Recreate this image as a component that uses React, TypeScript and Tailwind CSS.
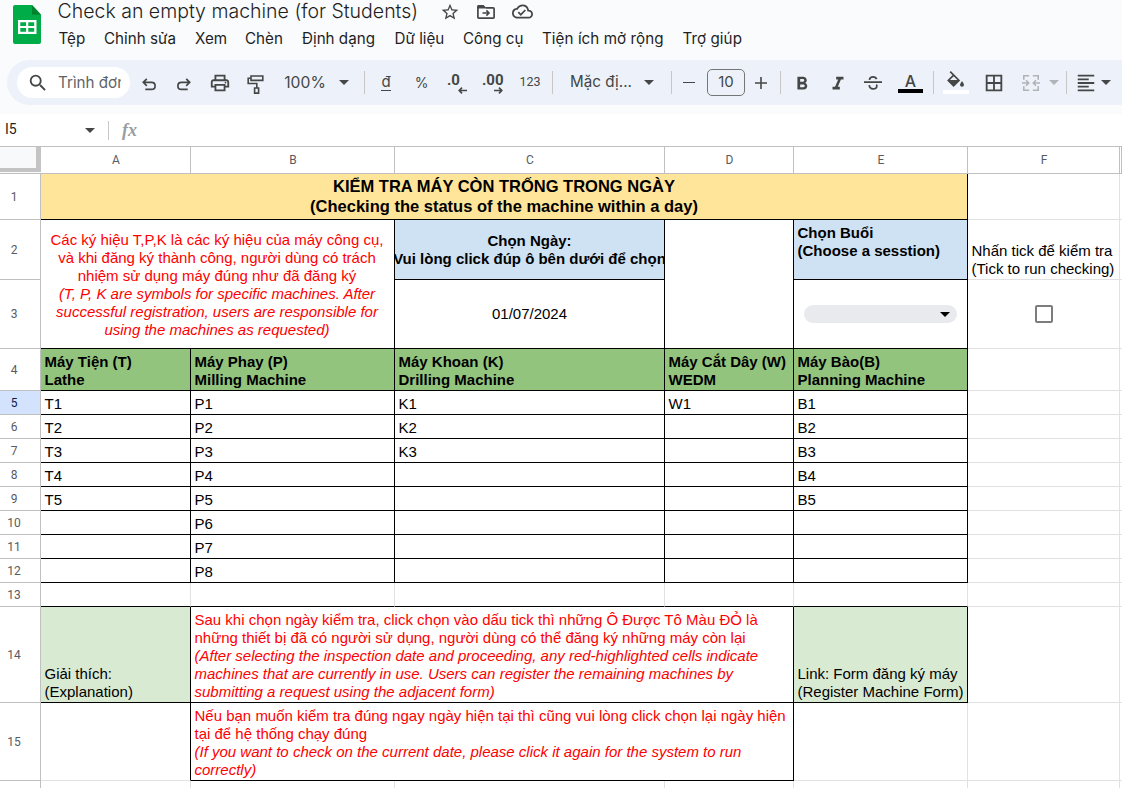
import type { ReactNode } from "react";
import {
  MdBorderAll,
  MdFormatAlignLeft,
  MdFormatBold,
  MdFormatItalic,
  MdOutlineCloudDone,
  MdOutlinePrint,
  MdSearch,
  MdStarBorder,
} from "react-icons/md";

const menus = [
  { label: "Tệp", cls: "w-[45.500px]" },
  { label: "Chỉnh sửa", cls: "w-[91px]" },
  { label: "Xem", cls: "w-[50px]" },
  { label: "Chèn", cls: "w-[57px]" },
  { label: "Định dạng", cls: "w-[92.500px]" },
  { label: "Dữ liệu", cls: "w-[68.500px]" },
  { label: "Công cụ", cls: "w-[79px]" },
  { label: "Tiện ích mở rộng", cls: "w-[140.500px] tracking-[0.06px]" },
  { label: "Trợ giúp", cls: "w-[70px] tracking-[0.06px]" },
];

function Caret({ className = "" }: { className?: string }) {
  return (
    <svg viewBox="0 0 10 5" className={`h-[5px] w-[10px] shrink-0 ${className}`}>
      <path d="M0 0h10L5 5z" fill="currentColor" />
    </svg>
  );
}

function Divider({ className }: { className: string }) {
  return <div className={`h-[23px] w-px shrink-0 bg-[#c7c7c7] ${className}`} />;
}

function Slot({ className, children }: { className: string; children: ReactNode }) {
  return (
    <div className={`flex h-full shrink-0 items-center justify-center whitespace-nowrap ${className}`}>
      {children}
    </div>
  );
}

function SheetsLogo() {
  return (
    <svg viewBox="0 0 28 39" className="mt-[5px] h-[39px] w-[28px] shrink-0">
      <path d="M2 0H19l9 9.500V37a2 2 0 0 1-2 2H2a2 2 0 0 1-2-2V2a2 2 0 0 1 2-2z" fill="#00ac47" />
      <path d="M19 0l9 9.700h-9z" fill="#00832d" />
      <path d="M5 15h18.500v14H5z" fill="#fff" />
      <path d="M7.300 17.200h5.800v3.700H7.300zM15.300 17.200h5.900v3.700h-5.900zM7.300 23.100h5.800v3.700H7.300zM15.300 23.100h5.900v3.700h-5.900z" fill="#00ac47" />
    </svg>
  );
}

function MoveIcon() {
  return (
    <svg viewBox="0 0 18 14" className="h-[14px] w-[18px]" fill="none" stroke="currentColor" strokeWidth="1.700">
      <path d="M.9 2.800v9.400c0 .5.4.9.9.9h14.400c.5 0 .9-.4.9-.9V3.700c0-.5-.4-.9-.9-.9H9" />
      <path d="M0 3.600V1.500C0 .7.7 0 1.500 0h5L9 2.500v1.100z" fill="currentColor" stroke="none" />
      <path d="M5.500 8h6M9.400 5.400 12 8l-2.600 2.600" strokeWidth="1.500" />
    </svg>
  );
}

function UndoIcon({ flip = false }: { flip?: boolean }) {
  return (
    <svg
      viewBox="0 0 14 13"
      className={flip ? "mt-[3px] h-[13px] w-[14px] -scale-x-100" : "mt-[3px] ml-px h-[13px] w-[14px]"}
      fill="none"
      stroke="currentColor"
      strokeWidth="1.700"
    >
      <path d="M4.800.8 1.300 4.300l3.500 3.500M1.500 4.300h8.100c2 0 3.500 1.500 3.500 3.600 0 2-1.500 3.500-3.500 3.500H3.300" />
    </svg>
  );
}

function RollerIcon() {
  return (
    <svg viewBox="0 0 17 19" className="mt-[3px] h-[19px] w-[17px]" fill="none" stroke="currentColor" strokeWidth="1.600">
      <path d="M4 1h11.800v4.400H4zM4 3.200H1.200v5.300h8.600V13M7.600 13h4v5.100h-4z" />
    </svg>
  );
}

function Decimal({ digits, right = false }: { digits: string; right?: boolean }) {
  return (
    <div className="mt-[3px] flex w-[20px] flex-col">
      <span className={`font-['Roboto',sans-serif] text-[15px] leading-[13px] font-bold ${right ? "-ml-px" : "text-left"}`}>{digits}</span>
      <svg viewBox="0 0 9 7" className={`h-[7px] w-[9px] self-end ${right ? "-scale-x-100" : ""}`} fill="none" stroke="currentColor" strokeWidth="1.600">
        <path d="M9 3.500H1.200M4 .6 1.200 3.500 4 6.400" />
      </svg>
    </div>
  );
}

function StrikeIcon() {
  return (
    <svg viewBox="0 0 18 14" className="h-[14px] w-[18px]" fill="none" stroke="currentColor" strokeWidth="1.700">
      <path d="M0 6.200h18M5.400 3.900C5.700 2 7 .9 9.100.9c1.700 0 2.900.7 3.500 2.200M5.200 9.200c.3 2.400 1.700 3.700 3.900 3.700 2.300 0 3.700-1.100 3.700-2.900 0-.6-.1-1.100-.4-1.500" />
    </svg>
  );
}

function FillIcon() {
  return (
    <svg viewBox="0 0 18 17" className="h-[17px] w-[18px]">
      <path d="M3.200.6 12 9.400 6.600 14.800 1.300 9.400l5.400-5.300" fill="none" stroke="currentColor" strokeWidth="1.700" />
      <path d="M1.300 9h10.800l-5.500 5.600z" fill="currentColor" />
      <path d="M15 10.300s-2 2.200-2 3.500a2 2 0 0 0 4 0c0-1.300-2-3.500-2-3.500z" fill="currentColor" />
    </svg>
  );
}

function MergeIcon() {
  return (
    <svg viewBox="0 0 18 16" className="h-[16px] w-[18px]" fill="none" stroke="currentColor" strokeWidth="1.600">
      <path d="M7.200.8H1.800v4M10.800.8h5.400v4M7.200 15.200H1.800v-4M10.800 15.200h5.400v-4" />
      <path d="M0 8h6.500M4 5.300 6.700 8 4 10.700M18 8h-6.500M14 5.300 11.300 8l2.700 2.700" />
    </svg>
  );
}

function Toolbar() {
  return (
    <div className="ml-[7px] flex h-[45px] shrink-0 items-center overflow-hidden rounded-l-full bg-[#edf2fa] text-[#444746]">
      <div className="ml-[10px] flex h-[31px] w-[113px] shrink-0 items-center overflow-hidden rounded-full bg-white">
        <MdSearch className="ml-[10px] size-[22px] shrink-0" />
        <span className="ml-[9px] w-[63px] overflow-hidden pt-px text-[15.200px] whitespace-nowrap text-[#5f6368]">Trình đơn</span>
      </div>
      <Slot className="ml-[6px] w-6"><UndoIcon /></Slot>
      <Slot className="ml-3 w-6"><UndoIcon flip /></Slot>
      <Slot className="ml-3 w-6"><MdOutlinePrint className="mt-px size-[22px]" /></Slot>
      <Slot className="ml-[11px] w-6"><RollerIcon /></Slot>
      <Slot className="ml-[17px] w-[42px] pt-px text-[15.700px]">100%</Slot>
      <Slot className="ml-[6px] w-6"><Caret /></Slot>
      <Divider className="ml-2" />
      <Slot className="ml-[11px] w-5">
        <span className="h-[17px] border-b-[1.500px] border-current text-[15px] leading-[15px]">đ</span>
      </Slot>
      <Slot className="ml-[15px] w-[21px] text-[14px]">%</Slot>
      <Slot className="ml-[13px] w-6"><Decimal digits=".0" /></Slot>
      <Slot className="ml-3 w-6"><Decimal digits=".00" right /></Slot>
      <Slot className="ml-[13px] w-6 font-['Roboto',sans-serif] text-[12.500px]">123</Slot>
      <Divider className="ml-[10px]" />
      <Slot className="ml-[17px] w-[62px] text-[15.200px]">Mặc đị...</Slot>
      <Slot className="ml-[5px] w-6"><Caret /></Slot>
      <Divider className="ml-[10px]" />
      <Slot className="ml-[5px] w-6"><div className="h-[1.500px] w-[12px] bg-current" /></Slot>
      <div className="ml-[6px] flex h-[27px] w-[38px] shrink-0 items-center justify-center rounded-[5px] border border-[#747775] text-[15px]">10</div>
      <Slot className="ml-1 w-6">
        <svg viewBox="0 0 12 12" className="size-[12px]" fill="none" stroke="currentColor" strokeWidth="1.600"><path d="M6 0v12M0 6h12" /></svg>
      </Slot>
      <Divider className="ml-[7px]" />
      <Slot className="ml-[9px] w-6"><MdFormatBold className="mt-[3px] size-[22px]" /></Slot>
      <Slot className="ml-3 w-6"><MdFormatItalic className="mt-[3px] size-[22px]" /></Slot>
      <Slot className="ml-[11px] w-6"><StrikeIcon /></Slot>
      <div className="mt-[2px] ml-[13px] flex w-[25px] shrink-0 flex-col items-center">
        <span className="h-[15px] text-[16px] leading-[14px] font-medium">A</span>
        <div className="h-1 w-full bg-black" />
      </div>
      <Divider className="ml-[10px]" />
      <div className="-mt-px ml-[9px] flex w-[26px] shrink-0 flex-col items-center">
        <FillIcon />
        <div className="mt-[2px] h-1 w-full bg-white" />
      </div>
      <Slot className="ml-[13px] w-6"><MdBorderAll className="mt-px size-[22px]" /></Slot>
      <Slot className="ml-[13px] w-6 text-[#b0b3b7]"><MergeIcon /></Slot>
      <Slot className="ml-[2px] w-[18px] text-[#b0b3b7]"><Caret /></Slot>
      <Divider className="ml-[3px]" />
      <Slot className="ml-[7px] w-6"><MdFormatAlignLeft className="mt-px size-[22px]" /></Slot>
      <Slot className="ml-px w-[14px]"><Caret /></Slot>
    </div>
  );
}

const K = "border-black";
const G = "border-[#e1e1e1]";
const MIX_RK = "border-r-black border-b-[#e1e1e1]";
const MIX_BK = "border-r-[#e1e1e1] border-b-black";

function Cell({ className, children }: { className: string; children?: ReactNode }) {
  return (
    <div className={`flex min-w-0 flex-col justify-end overflow-hidden border-r border-b pb-px pl-[3.500px] whitespace-nowrap ${className}`}>
      {children}
    </div>
  );
}

function RowHead({ n, active = false }: { n?: number; active?: boolean }) {
  return (
    <div
      className={`col-start-1 flex items-center justify-center border-r border-b border-[#c0c0c0] pr-3 font-['Roboto',sans-serif] text-[12px] ${
        active ? "bg-[#d3e3fd] text-[#041e49]" : "text-[#575b5f]"
      }`}
    >
      {n}
    </div>
  );
}

const machines = [
  ["T1", "P1", "K1", "W1", "B1"],
  ["T2", "P2", "K2", "", "B2"],
  ["T3", "P3", "K3", "", "B3"],
  ["T4", "P4", "", "", "B4"],
  ["T5", "P5", "", "", "B5"],
  ["", "P6", "", "", ""],
  ["", "P7", "", "", ""],
  ["", "P8", "", "", ""],
];

function MachineRow({ n, cells }: { n: number; cells: string[] }) {
  return (
    <>
      <RowHead n={n} active={n === 5} />
      {cells.map((c, i) => (
        <Cell key={i} className={K}>{c}</Cell>
      ))}
      <Cell className={G} />
      <Cell className={`!border-r-0 ${G}`} />
    </>
  );
}

function Sheet() {
  return (
    <div className="grid shrink-0 grid-cols-[41px_150px_204px_270px_129px_174px_152px_2px] grid-rows-[27px_46px_60px_69px_42px_repeat(9,24px)_96px_78px_8px] bg-white font-['Liberation_Sans',Arial,sans-serif] text-[15px] leading-[18px] text-black">
      <div className="flex border-b border-[#c0c0c0] bg-[#f8f9fa] pb-px">
        <div className="w-full border-r-[5px] border-b-4 border-[#c4c4c4]" />
      </div>
      {["A", "B", "C", "D", "E", "F", ""].map((c) => (
        <div key={c} className="flex items-center justify-center border-r border-b border-[#c0c0c0] pl-px font-['Roboto',sans-serif] text-[12px] text-[#575b5f] last:border-r-0">
          {c}
        </div>
      ))}

      <RowHead n={1} />
      <Cell className={`col-span-5 !justify-center bg-[#ffe599] !pl-0 text-center text-[16.500px] leading-[20px] font-bold ${K}`}>
        <p>KIỂM TRA MÁY CÒN TRỐNG TRONG NGÀY</p>
        <p>(Checking the status of the machine within a day)</p>
      </Cell>
      <Cell className={G} />
      <Cell className={`!border-r-0 ${G}`} />

      <RowHead n={2} />
      <Cell className={`col-span-2 row-span-2 !justify-center !pt-px !pr-px !pb-0 !pl-0 text-center text-[#ff0000] ${K}`}>
        <p>Các ký hiệu T,P,K là các ký hiệu của máy công cụ,</p>
        <p>và khi đăng ký thành công, người dùng có trách</p>
        <p>nhiệm sử dụng máy đúng như đã đăng ký</p>
        <p className="italic">(T, P, K are symbols for specific machines. After</p>
        <p className="italic">successful registration, users are responsible for</p>
        <p className="italic">using the machines as requested)</p>
      </Cell>
      <Cell className={`items-center !justify-center bg-[#cfe2f3] !pb-0 !pl-0 font-bold ${K}`}>
        <p>Chọn Ngày:</p>
        <p>Vui lòng click đúp ô bên dưới để chọn</p>
      </Cell>
      <Cell className={`row-span-2 ${K}`} />
      <Cell className={`!justify-start bg-[#cfe2f3] pt-[4px] font-bold ${K}`}>
        <p>Chọn Buổi</p>
        <p>(Choose a sesstion)</p>
      </Cell>
      <Cell className={G}>
        <p>Nhấn tick để kiểm tra</p>
        <p>(Tick to run checking)</p>
      </Cell>
      <Cell className={`!border-r-0 ${G}`} />

      <RowHead n={3} />
      <Cell className={`items-center !justify-center !pb-0 !pl-0 ${K}`}>01/07/2024</Cell>
      <Cell className={`items-center !justify-center !pb-0 !pl-0 ${K}`}>
        <div className="flex h-[18px] w-[153px] items-center justify-end rounded-full bg-[#e8eaed] pr-[7px]">
          <Caret />
        </div>
      </Cell>
      <Cell className={`items-center !justify-center !pb-0 !pl-0 ${G}`}>
        <div className="size-[18px] rounded-[2px] border-2 border-[#7d7d7d]" />
      </Cell>
      <Cell className={`!border-r-0 ${G}`} />

      <RowHead n={4} />
      {[
        ["Máy Tiện (T)", "Lathe"],
        ["Máy Phay (P)", "Milling Machine"],
        ["Máy Khoan (K)", "Drilling Machine"],
        ["Máy Cắt Dây (W)", "WEDM"],
        ["Máy Bào(B)", "Planning Machine"],
      ].map(([vi, en]) => (
        <Cell key={en} className={`bg-[#93c47d] font-bold ${K}`}>
          <p>{vi}</p>
          <p>{en}</p>
        </Cell>
      ))}
      <Cell className={G} />
      <Cell className={`!border-r-0 ${G}`} />

      {machines.map((cells, i) => (
        <MachineRow key={i} n={i + 5} cells={cells} />
      ))}

      <RowHead n={13} />
      <Cell className={MIX_BK} />
      <Cell className={MIX_BK} />
      <Cell className={MIX_BK} />
      <Cell className={MIX_BK} />
      <Cell className={MIX_BK} />
      <Cell className={G} />
      <Cell className={`!border-r-0 ${G}`} />

      <RowHead n={14} />
      <Cell className={`bg-[#d9ead3] ${K}`}>
        <p>Giải thích:</p>
        <p>(Explanation)</p>
      </Cell>
      <Cell className={`col-span-3 text-[#ff0000] ${K}`}>
        <p>Sau khi chọn ngày kiểm tra, click chọn vào dấu tick thì những Ô Được Tô Màu ĐỎ là</p>
        <p>những thiết bị đã có người sử dụng, người dùng có thể đăng ký những máy còn lại</p>
        <p className="italic">(After selecting the inspection date and proceeding, any red-highlighted cells indicate</p>
        <p className="italic">machines that are currently in use. Users can register the remaining machines by</p>
        <p className="italic">submitting a request using the adjacent form)</p>
      </Cell>
      <Cell className={`bg-[#d9ead3] ${K}`}>
        <p>Link: Form đăng ký máy</p>
        <p>(Register Machine Form)</p>
      </Cell>
      <Cell className={G} />
      <Cell className={`!border-r-0 ${G}`} />

      <RowHead n={15} />
      <Cell className={MIX_RK} />
      <Cell className={`col-span-3 text-[#ff0000] ${K}`}>
        <p>Nếu bạn muốn kiểm tra đúng ngay ngày hiện tại thì cũng vui lòng click chọn lại ngày hiện</p>
        <p>tại để hệ thống chạy đúng</p>
        <p className="italic">(If you want to check on the current date, please click it again for the system to run</p>
        <p className="italic">correctly)</p>
      </Cell>
      <Cell className={G} />
      <Cell className={G} />
      <Cell className={`!border-r-0 ${G}`} />

      <div className="border-r border-[#c0c0c0]" />
      <div className="border-r border-[#e1e1e1]" />
      <div className="border-r border-[#e1e1e1]" />
      <div className="border-r border-[#e1e1e1]" />
      <div className="border-r border-[#e1e1e1]" />
      <div className="border-r border-[#e1e1e1]" />
      <div className="border-r border-[#e1e1e1]" />
    </div>
  );
}

export default function App() {
  return (
    <div className="flex h-[788px] w-[1122px] flex-col overflow-hidden bg-[#f9fbfd] font-['Inter',sans-serif] text-[#1f1f1f]">
      <header className="flex h-[60px] shrink-0 pl-[13px]">
        <SheetsLogo />
        <div className="ml-[16.500px] flex flex-col">
          <div className="flex h-[23px] items-center text-[#444746]">
            <h1 className="w-[361px] pb-[2px] text-[19.500px] leading-[24px] font-light whitespace-nowrap text-[#1f1f1f]">
              Check an empty machine (for Students)
            </h1>
            <MdStarBorder className="ml-[21.500px] size-[20px]" />
            <div className="ml-[17px]"><MoveIcon /></div>
            <MdOutlineCloudDone className="ml-[17px] size-[21px]" />
          </div>
          <nav className="mt-[4px] flex h-[24px] items-center pl-px text-[15.200px] whitespace-nowrap">
            {menus.map((m) => (
              <span key={m.label} className={m.cls}>{m.label}</span>
            ))}
          </nav>
        </div>
      </header>
      <Toolbar />
      <div className="mt-[9px] flex h-[33px] shrink-0 items-center border-b border-[#c0c0c0] bg-white text-[#444746]">
        <span className="w-[85px] pb-[2px] pl-[5px] font-['Roboto',sans-serif] text-[14px] text-[#1f1f1f]">I5</span>
        <Caret />
        <div className="ml-[13px] h-[19px] w-px bg-[#c7c7c7]" />
        <span className="ml-[13px] font-['Liberation_Serif',serif] text-[18px] font-bold text-[#9a9d9f] italic">fx</span>
      </div>
      <Sheet />
    </div>
  );
}
